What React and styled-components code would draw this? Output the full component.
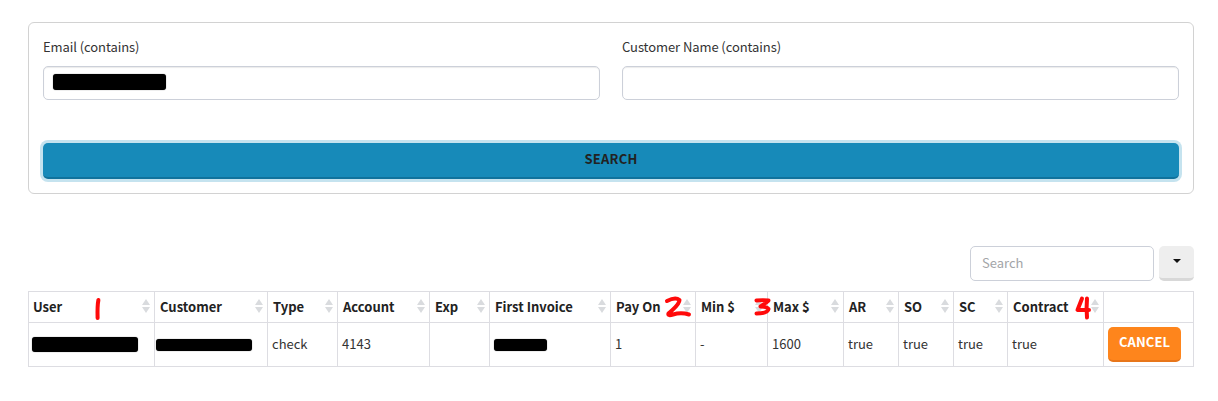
import React from "react";
import styled, { createGlobalStyle } from "styled-components";

const GlobalStyle = createGlobalStyle`
  html, body { margin: 0; padding: 0; background: #fff; }
  body {
    font-family: "Noto Sans CJK SC", "Noto Sans", sans-serif;
    font-size: 13px;
    color: #333;
  }
  * { box-sizing: border-box; }
`;

const columns = [
  { name: "User", width: 126 },
  { name: "Customer", width: 113 },
  { name: "Type", width: 70 },
  { name: "Account", width: 92 },
  { name: "Exp", width: 60 },
  { name: "First Invoice", width: 121 },
  { name: "Pay On", width: 85, mark: "two" },
  { name: "Min $", width: 72, mark: "three" },
  { name: "Max $", width: 76 },
  { name: "AR", width: 55 },
  { name: "SO", width: 55 },
  { name: "SC", width: 54 },
  { name: "Contract", width: 96, mark: "four" },
  { name: "", width: 90 },
];

const App = () => {
  return (
    <Page>
      <GlobalStyle />
      <Card>
        <FieldRow>
          <Field>
            <Label>Email (contains)</Label>
            <InputBox>
              <EmailRedact $w={113} $h={16} />
            </InputBox>
          </Field>
          <Field>
            <Label>Customer Name (contains)</Label>
            <InputBox />
          </Field>
        </FieldRow>
        <SearchButton>SEARCH</SearchButton>
      </Card>

      <Toolbar>
        <SearchInput placeholder="Search" />
        <CaretButton>
          <Caret />
        </CaretButton>
      </Toolbar>

      <Table>
        <colgroup>
          {columns.map((c, i) => (
            <Col key={i} $w={c.width} />
          ))}
        </colgroup>
        <thead>
          <tr>
            {columns.map((c, i) => (
              <Th key={i}>
                {c.name && (
                  <ThInner>
                    <span>{c.name}</span>
                    <SortIcon />
                  </ThInner>
                )}
                {i === 0 && <MarkOne />}
                {c.mark === "two" && <MarkTwo />}
                {c.mark === "three" && <MarkThree />}
                {c.mark === "four" && <MarkFour />}
              </Th>
            ))}
          </tr>
        </thead>
        <tbody>
          <tr>
            <Td $flush><Redact $w={106} $h={15} $pull={1} /></Td>
            <Td $flush><Redact $w={96} $h={12} $pull={3} /></Td>
            <Td>check</Td>
            <Td>4143</Td>
            <Td></Td>
            <Td $flush><Redact $w={53} $h={12} /></Td>
            <Td>1</Td>
            <Td>-</Td>
            <Td>1600</Td>
            <Td>true</Td>
            <Td>true</Td>
            <Td>true</Td>
            <Td>true</Td>
            <Td $flush><CancelButton>CANCEL</CancelButton></Td>
          </tr>
        </tbody>
      </Table>
    </Page>
  );
};

export default App;

const SortIcon = () => (
  <SortSvg viewBox="0 0 8 14" width="8" height="14">
    <path d="M4 0 L8 6 L0 6 Z" fill="#d9dbde" />
    <path d="M4 14 L8 8 L0 8 Z" fill="#d9dbde" />
  </SortSvg>
);

const MarkOne = () => (
  <MarkSvg $left={66} $top={6} width="6" height="22" viewBox="0 0 6 22">
    <path d="M3.4 2 C2.6 6 2.4 13 2.6 20" stroke="#ff0a0a" strokeWidth="4" fill="none" strokeLinecap="round" />
  </MarkSvg>
);

const MarkTwo = () => (
  <MarkSvg $left={53} $top={4} width="27" height="22" viewBox="0 0 27 22">
    <path d="M3 5 C8 2.5 13 2 15.5 4 C15.5 9 9 13 4.5 17.5 C3.5 19.5 6 19.5 9 18.5 C14 17 20 17 25 18.5" stroke="#ff0a0a" strokeWidth="4" fill="none" strokeLinecap="round" strokeLinejoin="round" />
  </MarkSvg>
);

const MarkThree = () => (
  <MarkSvg $left={58} $top={6} width="17" height="18" viewBox="0 0 17 18">
    <path d="M2.5 2.5 C7 2 11 2 14.5 2.5 C12 5 9.5 6.5 6.5 8.5 C10 8.5 13 9 14.5 11 C14 14.5 9 15.5 2.5 15.5" stroke="#ff0a0a" strokeWidth="4" fill="none" strokeLinecap="round" strokeLinejoin="round" />
  </MarkSvg>
);

const MarkFour = () => (
  <MarkSvg $left={67} $top={4} width="16" height="24" viewBox="0 0 16 24">
    <path d="M7 2.5 L2.5 14 L14 14 M12 2.5 C11.5 8 11.5 15 12 21.5" stroke="#ff0a0a" strokeWidth="4" fill="none" strokeLinecap="round" strokeLinejoin="round" />
  </MarkSvg>
);

const Page = styled.div`
  padding: 22px 24px 34px 28px;
`;

const Card = styled.div`
  border: 1px solid #d2d2d2;
  border-radius: 6px;
  height: 172px;
  padding: 15px 14px 0;
`;

const FieldRow = styled.div`
  display: grid;
  grid-template-columns: 557px 557px;
  column-gap: 22px;
`;

const Field = styled.div`
  display: flex;
  flex-direction: column;
`;

const Label = styled.label`
  font-size: 13px;
  line-height: 18px;
  height: 28px;
  letter-spacing: -0.08px;
  color: #333;
`;

const InputBox = styled.div`
  height: 34px;
  border: 1px solid #ccd0d9;
  border-radius: 5px;
  background: #fff;
  box-shadow: inset 0 1px 1px rgba(0, 0, 0, 0.08);
  display: flex;
  align-items: center;
  padding: 0 0 2px 9px;
`;

const SearchButton = styled.button`
  display: block;
  width: 100%;
  height: 36px;
  margin-top: 43px;
  padding: 0 0 3px;
  background: #178ab9;
  border: none;
  border-bottom: 2px solid #10729c;
  border-radius: 5px;
  box-shadow: 0 0 0 3px #c5e3ef;
  font-family: inherit;
  font-size: 13px;
  font-weight: 700;
  letter-spacing: 0.2px;
  color: #222;
`;

const Toolbar = styled.div`
  display: flex;
  justify-content: flex-end;
  gap: 5px;
  margin-top: 52px;
`;

const SearchInput = styled.input`
  width: 184px;
  height: 35px;
  border: 1px solid #ccd0d9;
  border-radius: 5px;
  padding: 0 11px 2px;
  font-family: inherit;
  font-size: 13px;
  outline: none;
  &::placeholder {
    color: #a3a5a8;
    opacity: 1;
  }
`;

const CaretButton = styled.button`
  width: 35px;
  height: 35px;
  background: #eee;
  border: none;
  border-bottom: 3px solid #d8d8d8;
  border-radius: 5px;
  display: flex;
  align-items: flex-start;
  justify-content: center;
  padding: 13px 0 0;
`;

const Caret = styled.span`
  width: 0;
  height: 0;
  border-left: 4px solid transparent;
  border-right: 4px solid transparent;
  border-top: 4px solid #111;
`;

const Table = styled.table`
  width: 1165px;
  table-layout: fixed;
  border-collapse: collapse;
  margin-top: 10px;
`;

const Col = styled.col`
  width: ${(p) => p.$w}px;
`;

const Th = styled.th`
  position: relative;
  height: 31px;
  padding: 0 4px 2px 5px;
  border: 1px solid #dddde2;
  text-align: left;
  font-size: 13px;
  font-weight: 700;
  color: #222;
  &:first-child {
    padding-left: 4px;
  }
`;

const ThInner = styled.div`
  display: flex;
  align-items: center;
  justify-content: space-between;
  white-space: nowrap;
`;

const SortSvg = styled.svg`
  display: block;
  flex: none;
`;

const MarkSvg = styled.svg`
  position: absolute;
  left: ${(p) => p.$left}px;
  top: ${(p) => p.$top}px;
  overflow: visible;
`;

const Td = styled.td`
  height: 44px;
  padding: ${(p) => (p.$flush ? "0 4px" : "0 4px 3px")};
  border: 1px solid #dddde2;
  font-size: 13px;
  color: #333;
  white-space: nowrap;
`;

const Redact = styled.span`
  display: block;
  width: ${(p) => p.$w}px;
  height: ${(p) => p.$h}px;
  margin-left: ${(p) => (p.$pull ? -p.$pull : 0)}px;
  background: #000;
  border-radius: 3px;
  box-shadow: 0 0 1px #555;
`;

const EmailRedact = styled(Redact)`
  flex: none;
`;

const CancelButton = styled.button`
  display: block;
  width: 73px;
  height: 35px;
  background: #fe851c;
  border: none;
  border-bottom: 2px solid #e8761a;
  border-radius: 5px;
  font-family: inherit;
  font-size: 13px;
  font-weight: 700;
  letter-spacing: 0.1px;
  color: #fff;
  padding: 0 0 4px;
`;
